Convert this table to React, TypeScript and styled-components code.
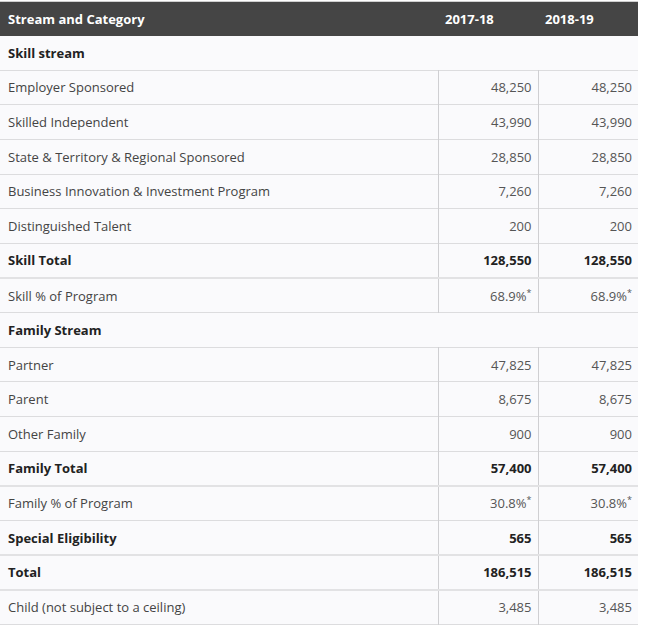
import React from "react";
import styled, { createGlobalStyle } from "styled-components";

const Global = createGlobalStyle`
  html, body { margin: 0; padding: 0; background: #ffffff; }
  body { font-family: "Open Sans", "Noto Sans", sans-serif; }
`;

const Wrap = styled.div`
  width: 638px;
  padding-top: 1px;
`;

const Table = styled.table`
  width: 638px;
  border-collapse: collapse;
  table-layout: fixed;
  font-size: 13px;
  border-top: 1px solid #cfcfcf;
`;

const HeadCell = styled.th<{ $first?: boolean }>`
  background: #454545;
  color: #ffffff;
  font-weight: 700;
  text-align: left;
  height: 34px;
  padding: 0 0 0 ${(p) => (p.$first ? 8 : 7)}px;
  box-sizing: border-box;
`;

const Row = styled.tr<{ $strong?: boolean }>`
  height: 34.65px;
  background: #fafafc;
  border-bottom: ${(p) => (p.$strong ? "2px solid #e2e2e4" : "1px solid #dcdcde")};
`;

const LabelCell = styled.td<{ $bold?: boolean }>`
  padding: 0 0 0 8px;
  color: ${(p) => (p.$bold ? "#222" : "#444")};
  font-weight: ${(p) => (p.$bold ? 700 : 400)};
  border-right: 1px solid #cfcfd2;
  white-space: nowrap;
`;

const GroupCell = styled.td`
  padding: 0 0 0 8px;
  color: #222;
  font-weight: 700;
`;

const NumCell = styled.td<{ $bold?: boolean; $last?: boolean }>`
  padding: 0 6px 0 0;
  text-align: right;
  color: ${(p) => (p.$bold ? "#222" : "#555")};
  font-weight: ${(p) => (p.$bold ? 700 : 400)};
  border-right: ${(p) => (p.$last ? "none" : "1px solid #cfcfd2")};
`;

const Star = styled.sup`
  font-size: 9px;
  line-height: 0;
  vertical-align: 5px;
`;

type R =
  | { kind: "group"; label: string }
  | { kind: "row"; label: string; a: string; b: string; bold?: boolean; star?: boolean };

const rows: R[] = [
  { kind: "group", label: "Skill stream" },
  { kind: "row", label: "Employer Sponsored", a: "48,250", b: "48,250" },
  { kind: "row", label: "Skilled Independent", a: "43,990", b: "43,990" },
  { kind: "row", label: "State & Territory & Regional Sponsored", a: "28,850", b: "28,850" },
  { kind: "row", label: "Business Innovation & Investment Program", a: "7,260", b: "7,260" },
  { kind: "row", label: "Distinguished Talent", a: "200", b: "200" },
  { kind: "row", label: "Skill Total", a: "128,550", b: "128,550", bold: true },
  { kind: "row", label: "Skill % of Program", a: "68.9%", b: "68.9%", star: true },
  { kind: "group", label: "Family Stream" },
  { kind: "row", label: "Partner", a: "47,825", b: "47,825" },
  { kind: "row", label: "Parent", a: "8,675", b: "8,675" },
  { kind: "row", label: "Other Family", a: "900", b: "900" },
  { kind: "row", label: "Family Total", a: "57,400", b: "57,400", bold: true },
  { kind: "row", label: "Family % of Program", a: "30.8%", b: "30.8%", star: true },
  { kind: "row", label: "Special Eligibility", a: "565", b: "565", bold: true },
  { kind: "row", label: "Total", a: "186,515", b: "186,515", bold: true },
  { kind: "row", label: "Child (not subject to a ceiling)", a: "3,485", b: "3,485" },
];

export default function App() {
  return (
    <Wrap>
      <Global />
      <Table>
        <colgroup>
          <col style={{ width: 438 }} />
          <col style={{ width: 100 }} />
          <col style={{ width: 100 }} />
        </colgroup>
        <thead>
          <tr>
            <HeadCell $first>Stream and Category</HeadCell>
            <HeadCell>2017-18</HeadCell>
            <HeadCell>2018-19</HeadCell>
          </tr>
        </thead>
        <tbody>
          {rows.map((r, i) =>
            r.kind === "group" ? (
              <Row key={i}>
                <GroupCell colSpan={3}>{r.label}</GroupCell>
              </Row>
            ) : (
              <Row key={i} $strong={r.bold}>
                <LabelCell $bold={r.bold}>{r.label}</LabelCell>
                <NumCell $bold={r.bold}>
                  {r.a}
                  {r.star && <Star>*</Star>}
                </NumCell>
                <NumCell $bold={r.bold} $last>
                  {r.b}
                  {r.star && <Star>*</Star>}
                </NumCell>
              </Row>
            )
          )}
        </tbody>
      </Table>
    </Wrap>
  );
}
